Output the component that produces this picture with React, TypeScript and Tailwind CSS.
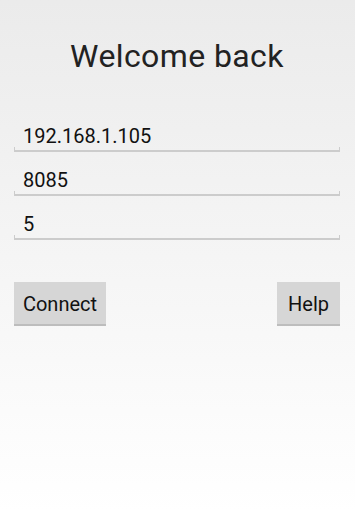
import React from "react";

const fields = ["192.168.1.105", "8085", "5"];

const Field = ({ value }: { value: string }) => (
	<div className="flex flex-col justify-end h-[44px]">
		<div className="pl-[9px] text-[20px] leading-[22px] text-[#111111]">{value}</div>
		<div className="h-[5px] border-x border-b-2 border-[#cccccc]" />
	</div>
);

const App = () => {
	return (
		<div
			className="min-h-[512px] bg-gradient-to-b from-[#ebebeb] to-[#ffffff] pl-[14px] pr-[15px]"
			style={{ fontFamily: "Roboto, 'Noto Sans', sans-serif" }}
		>
			<h1 className="pt-[38px] text-center text-[32px] leading-[36px] tracking-[0.4px] text-[#222222]">
				Welcome back
			</h1>
			<div className="mt-[34px] flex flex-col">
				{fields.map((f) => (
					<Field key={f} value={f} />
				))}
			</div>
			<div className="mt-[42px] flex justify-between">
				<button className="w-[92px] h-[44px] bg-[#d6d6d6] border-b-2 border-[#bdbdbd] text-[20px] leading-[44px] text-[#111111]">
					Connect
				</button>
				<button className="w-[63px] h-[44px] bg-[#d6d6d6] border-b-2 border-[#bdbdbd] text-[20px] leading-[44px] text-[#111111]">
					Help
				</button>
			</div>
		</div>
	);
};

export default App;
